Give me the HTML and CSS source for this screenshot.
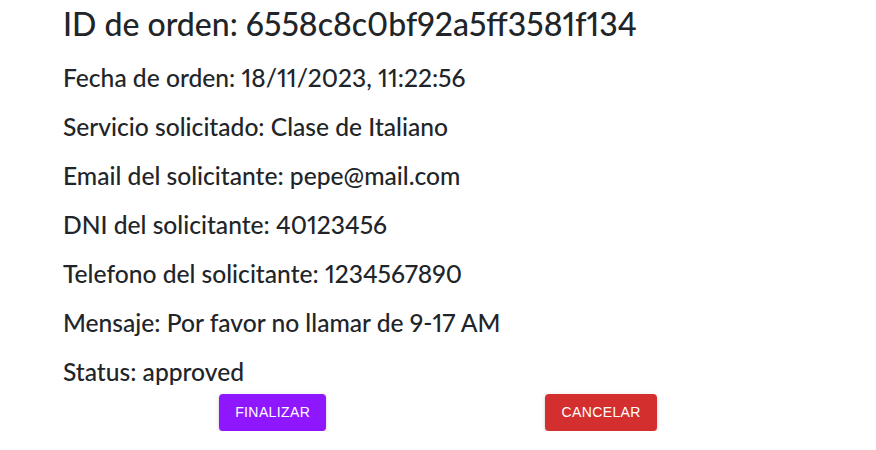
FILE: index.html
```html
<!DOCTYPE html>
<html lang="es">
<head>
<meta charset="utf-8">
<title>Orden</title>
<link rel="stylesheet" href="styles.css">
</head>
<body>
<main class="order">
  <div class="details">
    <h2 class="order-id">ID de orden: 6558c8c0bf92a5ff3581f134</h2>
    <h4 class="field field-first">Fecha de orden: 18/11/2023, 11:22:56</h4>
    <h4 class="field">Servicio solicitado: Clase de Italiano</h4>
    <h4 class="field">Email del solicitante: pepe@mail.com</h4>
    <h4 class="field">DNI del solicitante: 40123456</h4>
    <h4 class="field">Telefono del solicitante: 1234567890</h4>
    <h4 class="field">Mensaje: Por favor no llamar de 9-17 AM</h4>
    <h4 class="field">Status: approved</h4>
  </div>
  <div class="actions">
    <button class="btn btn-finish">Finalizar</button>
    <button class="btn btn-cancel">Cancelar</button>
  </div>
</main>
</body>
</html>
```

FILE: styles.css
```css
html, body {
  margin: 0;
  padding: 0;
  background: #ffffff;
}

body {
  font-family: Lato, "Noto Sans", sans-serif;
  color: #212529;
  font-variant-numeric: proportional-nums;
}

.details {
  padding: 0 0 0 63px;
}

.order-id {
  font-size: 32px;
  font-weight: 500;
  line-height: 38px;
  margin: 5px 0 0 0;
}

.field {
  font-size: 24.6px;
  font-weight: 500;
  line-height: 32px;
  margin: 17px 0 0 0;
}

.field-first {
  margin-top: 19px;
}

.actions {
  display: flex;
  justify-content: space-evenly;
  margin-top: 6px;
}

.btn {
  font-family: "Liberation Sans", Arial, sans-serif;
  font-size: 14px;
  font-weight: 400;
  letter-spacing: 0.4px;
  text-transform: uppercase;
  line-height: 24.5px;
  padding: 6px 16px;
  border: none;
  border-radius: 4px;
  color: #ffffff;
  cursor: pointer;
  box-shadow: 0 3px 1px -2px rgba(0,0,0,0.2), 0 2px 2px 0 rgba(0,0,0,0.14), 0 1px 5px 0 rgba(0,0,0,0.12);
}

.btn-finish {
  background: #8f17ff;
}

.btn-cancel {
  background: #d32f2f;
}
```
